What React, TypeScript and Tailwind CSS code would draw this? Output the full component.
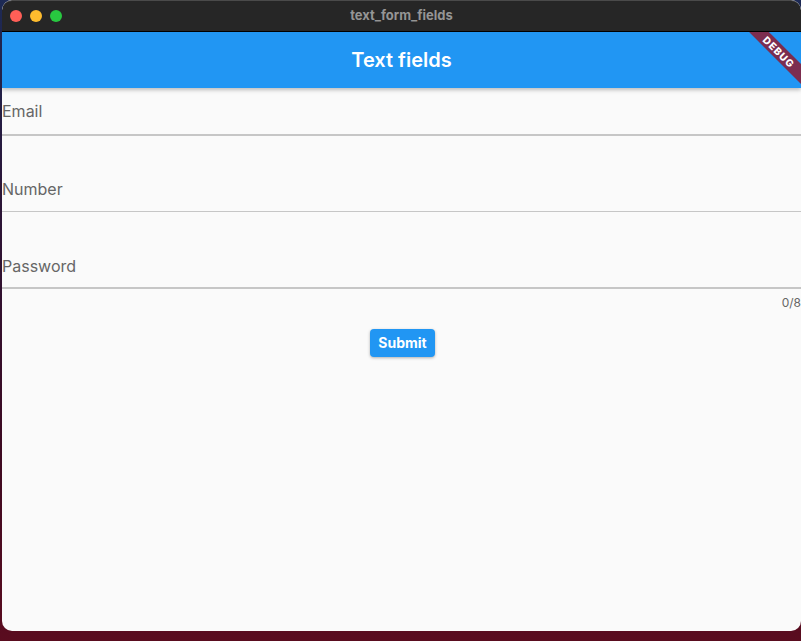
import React from "react";

function Field({ label, top, gap }: { label: string; top: string; gap: string }) {
  return (
    <div className={`${top} flex flex-col`}>
      <div className="h-[23px] flex items-center text-[16px] leading-none text-[#666666]">{label}</div>
      <div className={`${gap} h-[1.5px] bg-[#c6c6c6]`} />
    </div>
  );
}

export default function App() {
  return (
    <div
      className="w-[801px] h-[641px] overflow-hidden relative"
      style={{
        background:
          "linear-gradient(180deg, #1d2a55 0%, #2a1538 30%, #3d0a22 70%, #5a0c1f 100%)",
        fontFamily: "Inter, 'Noto Sans', sans-serif",
      }}
    >
      <div className="absolute left-[440px] top-0 w-[40px] h-[4px] bg-[#1d8fa8]" />
      <div className="absolute left-[480px] top-0 w-[45px] h-[4px] bg-[#c0283e]" />
      <div className="ml-[2px] w-[799px] h-[631px] rounded-[10px] overflow-hidden bg-[#fafafa] flex flex-col relative">
        {/* title bar */}
        <div className="h-[31px] bg-[#262626] flex items-center relative shrink-0 border-t border-[#4a4a4a] rounded-t-[10px]">
          <div className="flex gap-[8px] pl-[8px]">
            <div className="w-[12px] h-[12px] rounded-full bg-[#ff5f57]" />
            <div className="w-[12px] h-[12px] rounded-full bg-[#febc2e]" />
            <div className="w-[12px] h-[12px] rounded-full bg-[#28c840]" />
          </div>
          <div className="absolute inset-0 flex items-center justify-center text-[13px] font-bold text-[#959595]">
            text_form_fields
          </div>
        </div>
        <div className="h-[1px] bg-black shrink-0" />
        {/* content */}
        <div className="flex flex-col flex-1 relative overflow-hidden">
          {/* app bar */}
          <div className="h-[56px] bg-[#2196f3] flex items-center justify-center shrink-0 text-white text-[20px] font-semibold shadow-[0_2px_4px_rgba(0,0,0,0.25)] z-10">
            Text fields
          </div>
          {/* body */}
          <div className="flex flex-col flex-1">
            <Field label="Email" top="mt-[11px]" gap="mt-[12px]" />
            <Field label="Number" top="mt-[42px]" gap="mt-[10px]" />
            <Field label="Password" top="mt-[42px]" gap="mt-[10px]" />
            <div className="flex justify-end mt-[8px] mr-0 text-[12px] leading-none text-[#666666]">0/8</div>
            <div className="flex justify-center mt-[20px]">
              <button className="h-[28px] px-[8px] ml-[2px] rounded-[4px] bg-[#2196f3] text-white text-[14px] font-bold shadow-[0_1px_3px_rgba(0,0,0,0.3)]">
                Submit
              </button>
            </div>
          </div>
          {/* debug banner */}
          <div className="absolute right-[-38px] top-[13px] w-[120px] h-[14px] bg-[#7c2d4f] rotate-45 flex items-center justify-center text-white text-[10px] font-extrabold tracking-[1px] z-20 leading-none">
            DEBUG
          </div>
        </div>
      </div>
    </div>
  );
}
